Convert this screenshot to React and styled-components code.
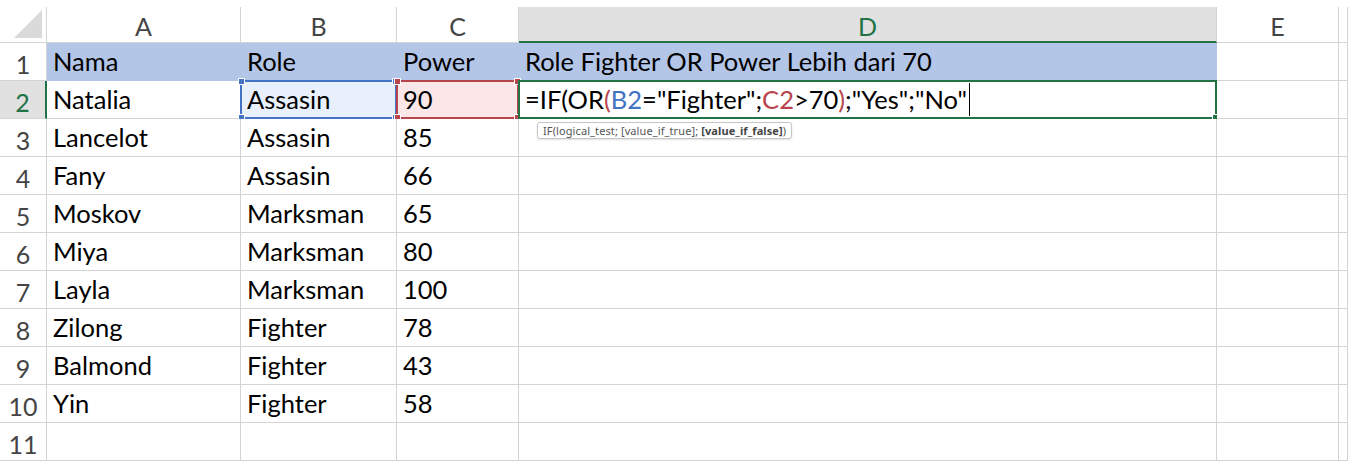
import React from "react";
import styled, { createGlobalStyle } from "styled-components";

const GlobalStyle = createGlobalStyle`
	html, body {
		margin: 0;
		padding: 0;
		background: #ffffff;
		overflow: hidden;
	}
`;

const GRID_LINE = "#d4d4d4";
const GREEN = "#217346";
const BLUE = "#4472c4";
const RED = "#b8454c";
const HEADER_FILL = "#b4c6e7";

const Sheet = styled.div`
	display: grid;
	grid-template-columns: 47px 194px 156px 122px 698px 122px 1fr;
	grid-template-rows: 36px repeat(11, 38px);
	padding-top: 7px;
	width: 1348px;
	font-family: "Lato", "Liberation Sans", sans-serif;
`;

const Corner = styled.div`
	position: relative;
	border-right: 1px solid ${GRID_LINE};
	border-bottom: 1px solid ${GRID_LINE};

	&::after {
		content: "";
		position: absolute;
		right: 4px;
		bottom: 4px;
		width: 0;
		height: 0;
		border-left: 28px solid transparent;
		border-bottom: 28px solid #dadada;
	}
`;

const ColHeader = styled.div`
	display: flex;
	align-items: center;
	justify-content: center;
	padding-top: 3px;
	font-size: 25px;
	color: ${(p) => (p.$active ? GREEN : "#444444")};
	background: ${(p) => (p.$active ? "#e1e1e1" : "#ffffff")};
	border-right: 1px solid ${GRID_LINE};
	border-bottom: ${(p) => (p.$active ? `2px solid ${GREEN}` : `1px solid ${GRID_LINE}`)};
	box-sizing: border-box;
`;

const RowHeader = styled.div`
	display: flex;
	align-items: center;
	justify-content: center;
	padding-top: 4px;
	font-size: 25px;
	color: ${(p) => (p.$active ? GREEN : "#444444")};
	background: ${(p) => (p.$active ? "#e1e1e1" : "#ffffff")};
	border-right: ${(p) => (p.$active ? `2px solid ${GREEN}` : `1px solid ${GRID_LINE}`)};
	border-bottom: 1px solid ${GRID_LINE};
	box-sizing: border-box;
`;

const Cell = styled.div`
	position: relative;
	display: flex;
	align-items: flex-end;
	padding: 0 0 4px 6px;
	box-sizing: border-box;
	font-size: 25.5px;
	color: #000000;
	white-space: nowrap;
	background: ${(p) => p.$fill || "#ffffff"};
	border-right: 1px solid ${(p) => p.$fill || GRID_LINE};
	border-bottom: 1px solid ${(p) => p.$fill || GRID_LINE};
`;

const RangeBox = styled.div`
	position: absolute;
	top: -1px;
	left: -1px;
	right: -1px;
	bottom: -1px;
	border: 2px solid ${(p) => p.$color};
	pointer-events: none;
`;

const Handle = styled.span`
	position: absolute;
	width: 5px;
	height: 5px;
	background: ${(p) => p.$color};
	border: 1px solid #ffffff;
	${(p) => (p.$top ? "top: -4px;" : "bottom: -4px;")}
	${(p) => (p.$left ? "left: -4px;" : "right: -4px;")}
`;

const FillHandle = styled.span`
	position: absolute;
	right: -4px;
	bottom: -4px;
	width: 5px;
	height: 5px;
	background: ${GREEN};
	border: 1px solid #ffffff;
`;

const Ref = styled.span`
	color: ${(p) => p.$color};
`;

const Caret = styled.span`
	display: inline-block;
	width: 1px;
	height: 33px;
	margin-left: 2px;
	margin-bottom: -2px;
	background: #000000;
`;

const Tooltip = styled.div`
	position: absolute;
	left: 18px;
	top: 41px;
	z-index: 2;
	padding: 0 5px;
	height: 17px;
	line-height: 15px;
	box-sizing: border-box;
	font-family: "Noto Sans", "Liberation Sans", sans-serif;
	font-size: 11px;
	letter-spacing: 0.1px;
	color: #555555;
	background: #ffffff;
	border: 1px solid #c6c6c6;
	border-radius: 3px;
	box-shadow: 0 1px 2px rgba(0, 0, 0, 0.12);

	b {
		color: #444444;
	}
`;

const columns = ["A", "B", "C", "D", "E", ""];

const rows = [
	["Nama", "Role", "Power", "Role Fighter OR Power Lebih dari 70"],
	["Natalia", "Assasin", "90", null],
	["Lancelot", "Assasin", "85", ""],
	["Fany", "Assasin", "66", ""],
	["Moskov", "Marksman", "65", ""],
	["Miya", "Marksman", "80", ""],
	["Layla", "Marksman", "100", ""],
	["Zilong", "Fighter", "78", ""],
	["Balmond", "Fighter", "43", ""],
	["Yin", "Fighter", "58", ""],
	["", "", "", ""],
];

const Selection = ({ color }) => (
	<RangeBox $color={color}>
		<Handle $color={color} $top $left />
		<Handle $color={color} $top />
		<Handle $color={color} $left />
		<Handle $color={color} />
	</RangeBox>
);

const Formula = () => (
	<>
		<span>
			=IF(OR<Ref $color={RED}>(</Ref>
			<Ref $color={BLUE}>B2</Ref>="Fighter";<Ref $color={RED}>C2</Ref>&gt;70
			<Ref $color={RED}>)</Ref>;"Yes";"No"
		</span>
		<Caret />
	</>
);

const App = () => {
	return (
		<>
			<GlobalStyle />
			<Sheet>
				<Corner />
				{columns.map((col, i) => (
					<ColHeader key={i} $active={col === "D"}>{col}</ColHeader>
				))}
				{rows.map((row, r) => {
					const rowNum = r + 1;
					const fill = rowNum === 1 ? HEADER_FILL : null;
					return (
						<React.Fragment key={r}>
							<RowHeader $active={rowNum === 2}>{rowNum}</RowHeader>
							<Cell $fill={fill}>{row[0]}</Cell>
							<Cell $fill={fill || (rowNum === 2 ? "#e8f0fb" : null)}>
								{row[1]}
								{rowNum === 2 && <Selection color={BLUE} />}
							</Cell>
							<Cell $fill={fill || (rowNum === 2 ? "#fbe6e8" : null)}>
								{row[2]}
								{rowNum === 2 && <Selection color={RED} />}
							</Cell>
							<Cell $fill={fill}>
								{rowNum === 2 ? <Formula /> : row[3]}
								{rowNum === 2 && (
									<>
										<RangeBox $color={GREEN}>
											<FillHandle />
										</RangeBox>
										<Tooltip>
											IF(logical_test; [value_if_true]; <b>[value_if_false]</b>)
										</Tooltip>
									</>
								)}
							</Cell>
							<Cell />
							<Cell />
						</React.Fragment>
					);
				})}
			</Sheet>
		</>
	);
};

export default App;
